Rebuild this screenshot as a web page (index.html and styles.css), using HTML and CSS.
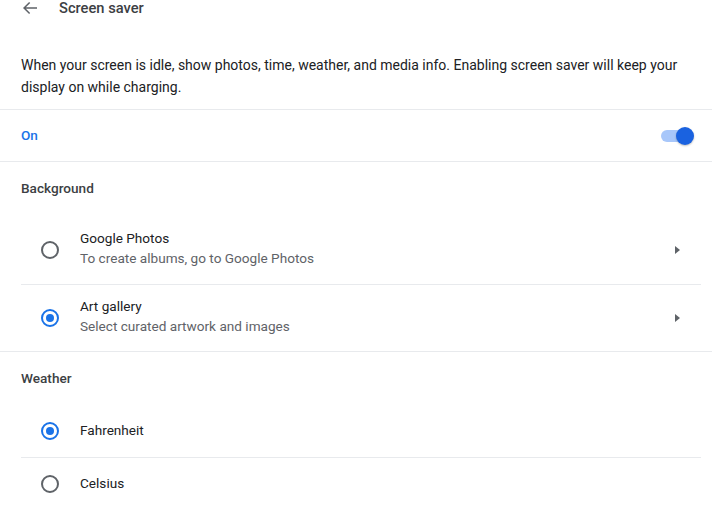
FILE: index.html
```html
<!DOCTYPE html>
<html>
<head>
<meta charset="utf-8">
<link rel="stylesheet" href="styles.css">
</head>
<body>
<div class="page">
  <div class="header">
    <svg class="back" width="16" height="16" viewBox="0 0 16 16"><path d="M15 7.25H3.9l4.3-4.3L7.1 2 1 8l6.1 6 1.05-1.05-4.25-4.2H15z" fill="#5f6368"/></svg>
    <span class="title">Screen saver</span>
  </div>
  <p class="desc">When your screen is idle, show photos, time, weather, and media info. Enabling screen saver will keep your display on while charging.</p>
  <div class="onrow">
    <span class="on">On</span>
    <span class="toggle"><span class="track"></span><span class="thumb"></span></span>
  </div>
  <div class="section-head">Background</div>
  <div class="list">
    <div class="item two">
      <span class="radio"></span>
      <div class="texts"><div class="label">Google Photos</div><div class="sub">To create albums, go to Google Photos</div></div>
      <span class="arrow"></span>
    </div>
    <div class="item two sep">
      <span class="radio checked"></span>
      <div class="texts"><div class="label">Art gallery</div><div class="sub">Select curated artwork and images</div></div>
      <span class="arrow"></span>
    </div>
  </div>
  <div class="section-head top-border">Weather</div>
  <div class="list">
    <div class="item one">
      <span class="radio checked"></span>
      <div class="texts"><div class="label">Fahrenheit</div></div>
    </div>
    <div class="item one sep">
      <span class="radio"></span>
      <div class="texts"><div class="label">Celsius</div></div>
    </div>
  </div>
</div>
</body>
</html>
```

FILE: styles.css
```css
html, body {
  margin: 0;
  padding: 0;
  background: #ffffff;
}
body {
  font-family: Roboto, "Liberation Sans", sans-serif;
  color: #202124;
  width: 712px;
  height: 517px;
  overflow: hidden;
}
.page {
  display: flex;
  flex-direction: column;
}
.header {
  height: 16px;
  display: flex;
  align-items: center;
  padding-left: 22px;
}
.back {
  display: block;
  flex: none;
}
.title {
  margin-left: 21px;
  font-size: 14.7px;
  font-weight: 500;
  color: #3c4043;
  line-height: 16px;
}
.desc {
  margin: 0;
  padding: 38px 30px 11px 21px;
  font-size: 14px;
  line-height: 22px;
  color: #202124;
  border-bottom: 1px solid #e8eaed;
}
.onrow {
  height: 51px;
  display: flex;
  align-items: center;
  justify-content: space-between;
  padding: 0 18px 0 21px;
  border-bottom: 1px solid #e8eaed;
}
.on {
  color: #1a73e8;
  font-size: 13.6px;
  font-weight: 500;
  line-height: 16px;
  margin-top: -2px;
}
.toggle {
  position: relative;
  width: 34px;
  height: 18px;
  display: block;
}
.track {
  position: absolute;
  left: 1px;
  top: 3px;
  width: 28px;
  height: 12px;
  border-radius: 6px;
  background: #a8c7fa;
}
.thumb {
  position: absolute;
  left: 16px;
  top: 0;
  width: 18px;
  height: 18px;
  border-radius: 50%;
  background: #1a62e0;
  box-shadow: 0 1px 2px rgba(0,0,0,0.25);
}
.section-head {
  height: 53px;
  box-sizing: border-box;
  padding: 0 0 2px 21px;
  display: flex;
  align-items: center;
  font-size: 13.6px;
  font-weight: 500;
  color: #3c4043;
}
.top-border {
  border-top: 1px solid #e8eaed;
  height: 54px;
}
.list {
  display: flex;
  flex-direction: column;
}
.item {
  display: flex;
  align-items: center;
  margin: 0 11px 0 21px;
  padding-left: 20px;
}
.item.two { height: 69px; }
.item.one { height: 52px; }
.item.sep { border-top: 1px solid #e8eaed; }
.item.two.sep { height: 66px; }
.radio {
  width: 14px;
  height: 14px;
  border: 2px solid #5f6368;
  border-radius: 50%;
  box-sizing: content-box;
  flex: none;
  position: relative;
}
.radio.checked {
  border-color: #1a73e8;
}
.radio.checked::after {
  content: "";
  position: absolute;
  left: 3px;
  top: 3px;
  width: 8px;
  height: 8px;
  border-radius: 50%;
  background: #1a73e8;
}
.texts {
  margin-left: 21px;
  flex: 1;
  margin-top: -3px;
}
.label {
  font-size: 13.6px;
  line-height: 20px;
  color: #202124;
}
.sub {
  font-size: 13.6px;
  line-height: 21px;
  color: #5f6368;
}
.arrow {
  width: 0;
  height: 0;
  border-top: 4px solid transparent;
  border-bottom: 4px solid transparent;
  border-left: 5px solid #5f6368;
  margin-right: 21px;
}
```
